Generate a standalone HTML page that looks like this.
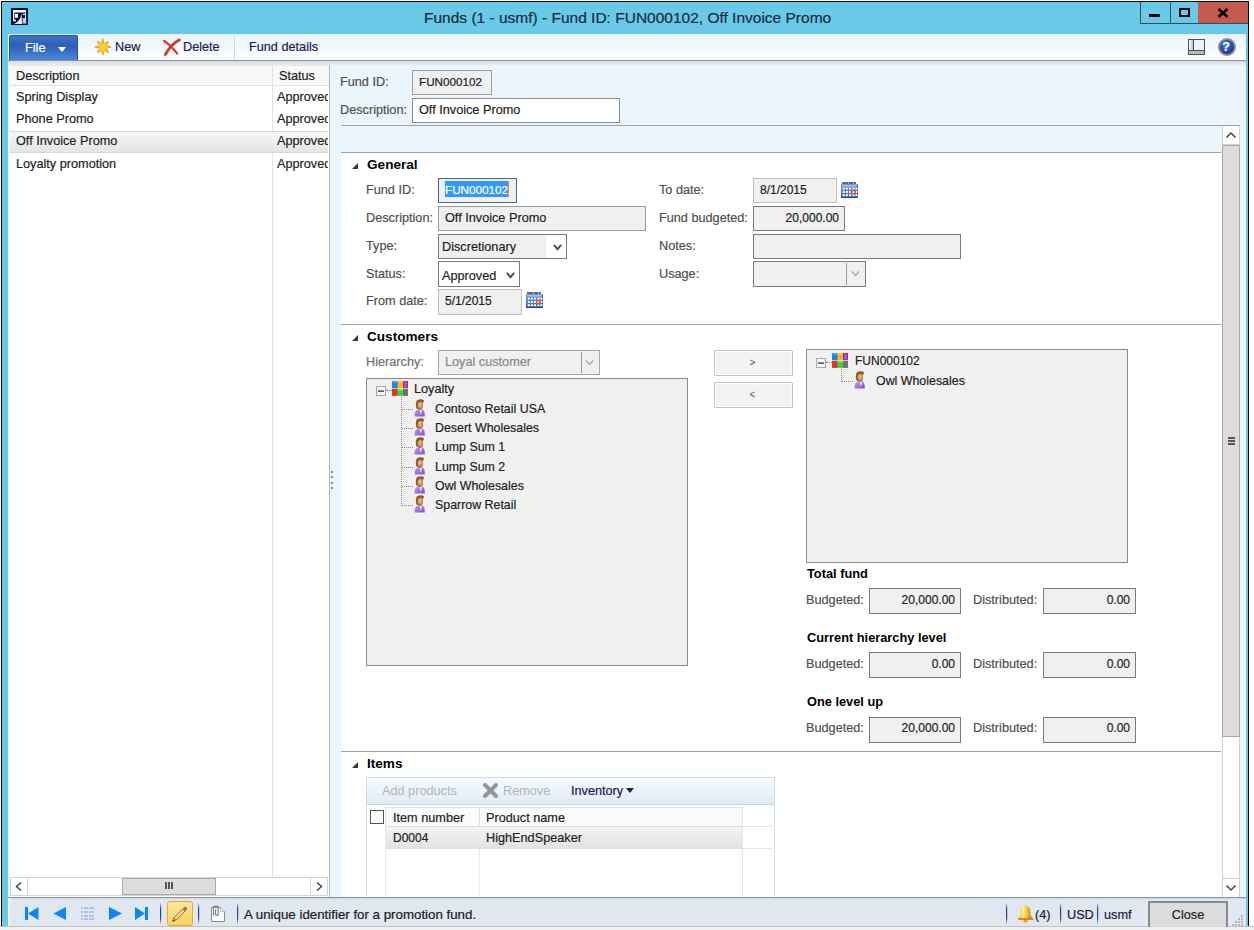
<!DOCTYPE html>
<html><head><meta charset="utf-8">
<style>
*{box-sizing:border-box;margin:0;padding:0}
html,body{width:1254px;height:930px;overflow:hidden;background:#f0f0f0;font-family:"Liberation Sans",sans-serif}
.a{position:absolute}
.t{position:absolute;font-size:12.7px;line-height:16px;white-space:nowrap;color:#1e1e1e;-webkit-text-stroke:0.2px currentColor}
.lb{color:#505050}
.n{font-size:12px}
.b{font-weight:bold;font-size:12.8px;color:#000;-webkit-text-stroke:0}
.box{position:absolute;background:#f0f0f0;border:1px solid #9a9a9a}
.hl{position:absolute;height:1px;background:#a0a0a0}
.sep{width:2px;height:23px;background:linear-gradient(rgba(30,70,120,0),#1e4a80 30%,#1e4a80 70%,rgba(30,70,120,0));border-right:1px solid rgba(255,255,255,.7)}
.tri{position:absolute;width:0;height:0;border-left:6px solid transparent;border-bottom:6px solid #383838}
</style></head><body>
<svg width="0" height="0" style="position:absolute"><defs>
<symbol id="hier" viewBox="0 0 16 15"><rect x="0" y="0" width="5.8" height="7" fill="#1a86da"/><rect x="5.8" y="0" width="5.2" height="7" fill="#ffb516"/><rect x="11" y="0" width="5" height="7" fill="#9c28a8"/><rect x="12.5" y="0.5" width="2" height="6" fill="#b860c0"/><rect x="0" y="7.7" width="5.8" height="7.2" fill="#de3232"/><rect x="5.8" y="7.7" width="5.2" height="7.2" fill="#36d636"/><rect x="11" y="7.7" width="5" height="7.2" fill="#707070"/><rect x="0.5" y="0.3" width="4.5" height="1.2" fill="#5ab8f0"/><rect x="6.3" y="0.3" width="4.2" height="1.2" fill="#ffd860"/><rect x="6.3" y="8" width="4.2" height="1.2" fill="#90f090"/></symbol>
<symbol id="pers" viewBox="0 0 11 18"><defs><linearGradient id="pg" x1="0" y1="0" x2="1" y2="1"><stop offset="0" stop-color="#c49cf8"/><stop offset="1" stop-color="#7f4cc8"/></linearGradient><radialGradient id="fg" cx="0.4" cy="0.35" r="0.7"><stop offset="0" stop-color="#f0c08a"/><stop offset="1" stop-color="#c47e40"/></radialGradient></defs><path d="M0.6 17.6 C0.3 12.8 1.6 10.9 4.8 10.2 L7.6 10.2 C10.2 10.9 10.9 12.8 10.7 17.6z" fill="url(#pg)"/><path d="M5.6 10.4 L6.8 16 L8.2 10.6z" fill="#e6f2ea"/><rect x="5" y="9" width="2.6" height="1.8" fill="#a8601c"/><path d="M3.4 1 C5 -0.2 9.2 0 10 1.6 L9.6 3.2 L8.8 3.4 L8.8 8.5 C8.5 9.6 7.5 10.2 6.5 10.2 L3 10 C1.6 8.2 1.6 5 2.2 3 C2.5 2 2.9 1.4 3.4 1z" fill="#8e5c2a"/><ellipse cx="6.3" cy="6.3" rx="2.6" ry="3.6" fill="url(#fg)"/><path d="M3.2 3.6 C4.5 1.8 8 1.6 9.6 3.2 C8 2.8 5 3 3.2 3.6z" fill="#8e5c2a"/></symbol>
<symbol id="cal" viewBox="0 0 17 16"><defs><linearGradient id="cg" x1="0" y1="0" x2="0" y2="1"><stop offset="0" stop-color="#6b9af0"/><stop offset="1" stop-color="#3766c4"/></linearGradient></defs>
<rect x="0" y="2" width="17" height="14" rx="0.5" fill="url(#cg)"/><rect x="0" y="15" width="17" height="1" fill="#1f3f80"/><rect x="16" y="3" width="1" height="13" fill="#2a4a90"/>
<rect x="1" y="3" width="15" height="1.5" fill="#9cc0f8"/>
<g fill="#222"><circle cx="2" cy="1" r="0.9"/><circle cx="4" cy="1" r="0.9"/><circle cx="6" cy="1" r="0.9"/><rect x="7.5" y="0.3" width="5" height="1.4"/><circle cx="14" cy="1" r="0.9"/></g>
<g fill="#fff"><rect x="1.8" y="5.6" width="2" height="2"/><rect x="4.9" y="5.6" width="2" height="2"/><rect x="8" y="5.6" width="2" height="2"/><rect x="11.4" y="5.6" width="2" height="2"/><rect x="14.5" y="5.6" width="2" height="2"/>
<rect x="1.8" y="9" width="2" height="2"/><rect x="4.9" y="9" width="2" height="2"/><rect x="8" y="9" width="2" height="2"/><rect x="14.5" y="9" width="2" height="2"/>
<rect x="1.8" y="12.2" width="2" height="2"/><rect x="4.9" y="12.2" width="2" height="2"/><rect x="8" y="12.2" width="2" height="2"/><rect x="11.4" y="12.2" width="2" height="2"/><rect x="14.5" y="12.2" width="2" height="2"/></g>
<circle cx="12.3" cy="10" r="2.6" fill="#e8501c"/><rect x="11.5" y="9.2" width="1.7" height="1.7" fill="#fff"/></symbol>
<symbol id="minus" viewBox="0 0 10 10"><rect x="0.5" y="0.5" width="9" height="9" fill="#f4f4f4" stroke="#a8a8a8"/><rect x="2" y="4.5" width="6" height="1.2" fill="#222"/></symbol>
</defs></svg>
<!-- window -->
<div class="a" style="left:0;top:0;width:1254px;height:926px;background:#fff"></div>
<div class="a" style="left:0;top:926px;width:1254px;height:1px;background:#c2c2c2"></div>
<div class="a" style="left:1px;top:1px;width:1248px;height:925px;background:#000"></div>
<div class="a" style="left:2px;top:2px;width:1246px;height:924px;background:#68c9e9"></div>
<!-- title icon -->
<svg class="a" style="left:11px;top:8px" width="17" height="17" viewBox="0 0 17 17"><rect width="17" height="17" fill="#021040"/><path d="M2 2 H15 V4.6 H3.3 V11.8 H5 V13.2 H2z" fill="#fff"/><rect x="4" y="5.8" width="3" height="4" fill="#fff"/><path d="M3 16 C6 14.5 9.5 12 10.6 5.5 L11 16z" fill="#f4f6fa"/><rect x="11.6" y="10" width="3.6" height="5.6" fill="#c5ceda"/><rect x="11.6" y="5.6" width="3.4" height="1.4" fill="#c5ceda"/><rect x="14" y="4.6" width="1" height="6" fill="#e8ecf2"/></svg>
<div class="t" style="left:424px;top:8px;font-size:15.5px;line-height:20px;color:#1b2a38">Funds (1 - usmf) - Fund ID: FUN000102, Off Invoice Promo</div>
<!-- caption buttons -->
<div class="a" style="left:1140px;top:2px;width:59px;height:22px;border:1px solid #3d4a52;border-top:0;background:#68c9e9"></div>
<div class="a" style="left:1170px;top:2px;width:1px;height:22px;background:#3d4a52"></div>
<div class="a" style="left:1198px;top:2px;width:50px;height:22px;background:#c65a4e;border-bottom:1px solid #3d4a52"></div>
<div class="a" style="left:1149px;top:14px;width:11px;height:3px;background:#000"></div>
<div class="a" style="left:1179px;top:8px;width:11px;height:9px;border:2px solid #000;border-top-width:2px"></div>
<svg class="a" style="left:1217px;top:8px" width="12" height="10" viewBox="0 0 12 10"><path d="M1.5 1 L10.5 9 M10.5 1 L1.5 9" stroke="#000" stroke-width="2.6"/></svg>

<!-- toolbar -->
<div class="a" style="left:8px;top:34px;width:1238px;height:27px;background:linear-gradient(#ecf4fc,#fdfeff);border-top:1px solid #e2eef9;border-bottom:1px solid #8e9297"></div>
<div class="a" style="left:8px;top:61px;width:1238px;height:4px;background:linear-gradient(#d5d8dc,#e9edf1)"></div>
<div class="a" style="left:9px;top:35px;width:69px;height:25px;background:linear-gradient(#3f73c6,#2e5fb4 40%,#4a88da);border-radius:2px 2px 0 0;border:1px solid #2b4f98;border-bottom:0"></div>
<div class="t" style="left:25px;top:40px;color:#fff">File</div>
<div class="a" style="left:58px;top:47px;width:0;height:0;border-left:4px solid transparent;border-right:4px solid transparent;border-top:5px solid #fff"></div>
<svg class="a" style="left:94px;top:38px" width="18" height="18" viewBox="0 0 18 18"><defs><radialGradient id="sg"><stop offset="0" stop-color="#ffe040"/><stop offset="0.45" stop-color="#ffc018"/><stop offset="1" stop-color="#e58a0a"/></radialGradient></defs><polygon points="9.00,0.60 10.42,5.58 14.94,3.06 12.42,7.58 17.40,9.00 12.42,10.42 14.94,14.94 10.42,12.42 9.00,17.40 7.58,12.42 3.06,14.94 5.58,10.42 0.60,9.00 5.58,7.58 3.06,3.06 7.58,5.58" fill="url(#sg)" stroke="#e89a10" stroke-width="0.6" stroke-linejoin="round"/><circle cx="9" cy="9" r="3.4" fill="#ffd52a"/></svg>
<div class="t" style="left:115px;top:39px;color:#1c1a58">New</div>
<svg class="a" style="left:162px;top:38px" width="19" height="19" viewBox="0 0 19 19"><path d="M2 2.8 C7 6 11.5 11 15.2 15.6" stroke="#d8402c" stroke-width="2.2" fill="none" stroke-linecap="round"/><path d="M17.2 2 C12 4.5 7 10 3.4 16.5" stroke="#d23a26" stroke-width="2.8" fill="none" stroke-linecap="round"/></svg>
<div class="t" style="left:183px;top:39px;color:#1c1a58">Delete</div>
<div class="a" style="left:234px;top:35px;width:1px;height:25px;background:#d3d9e0;box-shadow:1px 0 0 #fff"></div>
<div class="t" style="left:249px;top:39px;color:#1c1a58">Fund details</div>
<!-- layout + help icons -->
<div class="a" style="left:1188px;top:39px;width:17px;height:16px;border:1px solid #4a5058;background:#f0f0f0"></div>
<div class="a" style="left:1189px;top:40px;width:4px;height:11px;background:linear-gradient(90deg,#fff,#bbb)"></div>
<div class="a" style="left:1193px;top:40px;width:1px;height:11px;background:#4a5058"></div>
<div class="a" style="left:1189px;top:50px;width:15px;height:1px;background:#4a5058"></div>
<div class="a" style="left:1189px;top:51px;width:15px;height:3px;background:#b8bcc0"></div>
<div class="a" style="left:1218px;top:38px;width:18px;height:18px;border-radius:50%;background:radial-gradient(circle at 40% 35%,#4a78e0,#1636a8 70%);border:2px solid #8c8c8c"></div>
<div class="t" style="left:1222px;top:39px;font-weight:bold;font-size:13px;color:#fff">?</div>

<!-- main area bg -->
<div class="a" style="left:8px;top:65px;width:1238px;height:832px;background:#eaf5fd"></div>

<!-- left list -->
<div class="a" style="left:10px;top:65px;width:319px;height:832px;background:#fff"></div>
<div class="a" style="left:10px;top:65px;width:319px;height:21px;background:#f8f8f8;border-top:1px solid #e6e6e6;border-bottom:1px solid #e2e2e2"></div>
<div class="a" style="left:272px;top:66px;width:1px;height:19px;background:#e2e2e2"></div>
<div class="a" style="left:272px;top:86px;width:1px;height:791px;background:#d9e6f5"></div>
<div class="a" style="left:329px;top:65px;width:1px;height:832px;background:#a9bbd2"></div>
<div class="t" style="left:16px;top:68px">Description</div>
<div class="t" style="left:279px;top:68px">Status</div>
<div class="a" style="left:10px;top:131px;width:318px;height:22px;background:linear-gradient(#f6f6f6,#e4e4e4);border-top:1px solid #d6d6d6;border-bottom:1px solid #d8d8d8"></div>
<div class="t" style="left:16px;top:89px">Spring Display</div>
<div class="t" style="left:16px;top:111px">Phone Promo</div>
<div class="t" style="left:16px;top:133px">Off Invoice Promo</div>
<div class="t" style="left:16px;top:156px">Loyalty promotion</div>
<div class="a" style="left:276px;top:86px;width:52px;height:90px;overflow:hidden">
<div class="t" style="left:1px;top:3px">Approved</div>
<div class="t" style="left:1px;top:25px">Approved</div>
<div class="t" style="left:1px;top:47px">Approved</div>
<div class="t" style="left:1px;top:70px">Approved</div>
</div>
<!-- h scrollbar -->
<div class="a" style="left:10px;top:877px;width:318px;height:19px;background:#fff;border:1px solid #d4d4d4"></div>
<div class="a" style="left:27px;top:878px;width:1px;height:17px;background:#d4d4d4"></div>
<div class="a" style="left:310px;top:878px;width:1px;height:17px;background:#d4d4d4"></div>
<div class="a" style="left:122px;top:878px;width:94px;height:17px;background:#dcdcdc;border:1px solid #ababab"></div>
<div class="a" style="left:165px;top:882px;width:2px;height:7px;background:#555"></div>
<div class="a" style="left:168px;top:882px;width:2px;height:7px;background:#555"></div>
<div class="a" style="left:171px;top:882px;width:2px;height:7px;background:#555"></div>
<svg class="a" style="left:14px;top:881px" width="10" height="11"><path d="M7 1.5 L2.5 5.5 L7 9.5" stroke="#444" stroke-width="1.5" fill="none"/></svg>
<svg class="a" style="left:314px;top:881px" width="10" height="11"><path d="M3 1.5 L7.5 5.5 L3 9.5" stroke="#444" stroke-width="1.5" fill="none"/></svg>
<!-- splitter grip -->
<div class="a" style="left:331px;top:471px;width:2px;height:2px;background:#8a8a8a"></div>
<div class="a" style="left:331px;top:476px;width:2px;height:2px;background:#8a8a8a"></div>
<div class="a" style="left:331px;top:482px;width:2px;height:2px;background:#8a8a8a"></div>
<div class="a" style="left:331px;top:487px;width:2px;height:2px;background:#8a8a8a"></div>

<!-- header fields -->
<div class="t lb" style="left:340px;top:74px">Fund ID:</div>
<div class="box" style="left:412px;top:70px;width:80px;height:25px;border-color:#9a9a9a"></div>
<div class="t n" style="left:419px;top:74px;font-size:11.7px">FUN000102</div>
<div class="t lb" style="left:340px;top:102px">Description:</div>
<div class="box" style="left:412px;top:98px;width:208px;height:25px;background:#fff;border-color:#8a8a8a"></div>
<div class="t" style="left:419px;top:102px">Off Invoice Promo</div>
<div class="hl" style="left:341px;top:125px;width:899px"></div>

<!-- scroll body -->
<div class="a" style="left:341px;top:152px;width:881px;height:745px;background:#fff"></div>
<div class="hl" style="left:341px;top:152px;width:880px"></div>
<!-- v scrollbar -->
<div class="a" style="left:1222px;top:126px;width:18px;height:771px;background:#fff;border-left:1px solid #d0d0d0;border-right:1px solid #d0d0d0"></div>
<svg class="a" style="left:1225px;top:130px" width="12" height="10"><path d="M1.5 7.5 L6 3 L10.5 7.5" stroke="#444" stroke-width="1.5" fill="none"/></svg>
<div class="a" style="left:1222px;top:144px;width:18px;height:1px;background:#d0d0d0"></div>
<div class="a" style="left:1222px;top:145px;width:18px;height:592px;background:#dcdcdc;border:1px solid #a8a8a8"></div>
<div class="a" style="left:1228px;top:437px;width:7px;height:2px;background:#555"></div>
<div class="a" style="left:1228px;top:440px;width:7px;height:2px;background:#555"></div>
<div class="a" style="left:1228px;top:443px;width:7px;height:2px;background:#555"></div>
<div class="a" style="left:1222px;top:878px;width:18px;height:1px;background:#d0d0d0"></div>
<svg class="a" style="left:1225px;top:883px" width="12" height="10"><path d="M1.5 2.5 L6 7 L10.5 2.5" stroke="#444" stroke-width="1.5" fill="none"/></svg>

<!-- General -->
<div class="tri" style="left:352px;top:163px"></div>
<div class="t b" style="left:367px;top:157px;font-size:13.6px">General</div>
<div class="t lb" style="left:366px;top:182px">Fund ID:</div>
<div class="box" style="left:438px;top:178px;width:79px;height:25px;border-color:#3f6c98"></div>
<div class="a" style="left:445px;top:181px;width:63px;height:16px;background:#3399ff"></div>
<div class="a" style="left:508px;top:181px;width:1px;height:16px;background:#f08020"></div>
<div class="t n" style="left:445px;top:182px;color:#fff;font-size:11.7px">FUN000102</div>
<div class="t lb" style="left:366px;top:210px">Description:</div>
<div class="box" style="left:438px;top:206px;width:208px;height:25px"></div>
<div class="t" style="left:445px;top:210px">Off Invoice Promo</div>
<div class="t lb" style="left:366px;top:238px">Type:</div>
<div class="box" style="left:438px;top:234px;width:129px;height:25px;border-color:#7a7a7a"></div>
<div class="a" style="left:546px;top:235px;width:20px;height:23px;background:#fff"></div>
<svg class="a" style="left:553px;top:243px" width="9" height="9"><path d="M0.9 1.8 L4.5 6.2 L8.1 1.8" stroke="#4a4a4a" stroke-width="1.9" fill="none"/></svg>
<div class="t" style="left:442px;top:239px">Discretionary</div>
<div class="t lb" style="left:366px;top:266px">Status:</div>
<div class="box" style="left:438px;top:261px;width:82px;height:26px;background:#fff;border-color:#7a7a7a"></div>
<svg class="a" style="left:506px;top:271px" width="9" height="9"><path d="M0.9 1.8 L4.5 6.2 L8.1 1.8" stroke="#4a4a4a" stroke-width="1.9" fill="none"/></svg>
<div class="t" style="left:442px;top:268px">Approved</div>
<div class="t lb" style="left:366px;top:293px">From date:</div>
<div class="box" style="left:438px;top:289px;width:84px;height:26px;border-color:#c0c0c0"></div>
<div class="t n" style="left:445px;top:293px">5/1/2015</div>
<svg class="a" style="left:526px;top:292px" width="17" height="16" viewBox="0 0 17 16"><use href="#cal"/></svg>

<div class="t lb" style="left:659px;top:182px">To date:</div>
<div class="box" style="left:753px;top:178px;width:84px;height:25px;border-color:#c0c0c0"></div>
<div class="t n" style="left:760px;top:182px">8/1/2015</div>
<svg class="a" style="left:841px;top:182px" width="17" height="16" viewBox="0 0 17 16"><use href="#cal"/></svg>
<div class="t lb" style="left:659px;top:210px">Fund budgeted:</div>
<div class="box" style="left:753px;top:206px;width:92px;height:25px;border-color:#7a7a7a"></div>
<div class="t n" style="left:753px;top:210px;width:86px;text-align:right">20,000.00</div>
<div class="t lb" style="left:659px;top:238px">Notes:</div>
<div class="box" style="left:753px;top:234px;width:208px;height:25px;border-color:#7a7a7a"></div>
<div class="t lb" style="left:659px;top:266px">Usage:</div>
<div class="box" style="left:753px;top:261px;width:113px;height:26px;border-color:#7a7a7a"></div>
<div class="a" style="left:846px;top:263px;width:1px;height:22px;background:#9a9a9a"></div>
<svg class="a" style="left:851px;top:270px" width="9" height="8"><path d="M1 1.5 L4.5 5.5 L8 1.5" stroke="#a8a8a8" stroke-width="1.2" fill="none"/></svg>

<div class="hl" style="left:341px;top:324px;width:880px"></div>
<!-- Customers -->
<div class="tri" style="left:352px;top:335px"></div>
<div class="t b" style="left:367px;top:329px;font-size:13.6px">Customers</div>
<div class="t lb" style="left:366px;top:354px;color:#707070">Hierarchy:</div>
<div class="box" style="left:438px;top:350px;width:162px;height:25px;border-color:#a8a8a8"></div>
<div class="a" style="left:581px;top:352px;width:1px;height:21px;background:#9a9a9a"></div>
<svg class="a" style="left:585px;top:359px" width="9" height="8"><path d="M1 1.5 L4.5 5.5 L8 1.5" stroke="#a8a8a8" stroke-width="1.2" fill="none"/></svg>
<div class="t" style="left:445px;top:354px;color:#888">Loyal customer</div>

<div class="box" style="left:366px;top:378px;width:322px;height:288px;border-color:#858c94"></div>
<svg class="a" style="left:376px;top:386px" width="10" height="10"><use href="#minus"/></svg>
<svg class="a" style="left:392px;top:381px" width="16" height="15"><use href="#hier"/></svg>
<div class="t" style="left:414px;top:381px">Loyalty</div>
<div class="a" style="left:386px;top:390px;width:6px;height:1px;border-top:1px dotted #888"></div>
<div class="a" style="left:401px;top:397px;width:1px;height:109px;border-left:1px dotted #888"></div>
<div class="a" style="left:402px;top:409px;width:11px;height:1px;border-top:1px dotted #888"></div>
<svg class="a" style="left:414px;top:399px" width="11" height="18"><use href="#pers"/></svg>
<div class="t" style="left:435px;top:401px;font-size:12.4px">Contoso Retail USA</div>
<div class="a" style="left:402px;top:428px;width:11px;height:1px;border-top:1px dotted #888"></div>
<svg class="a" style="left:414px;top:418px" width="11" height="18"><use href="#pers"/></svg>
<div class="t" style="left:435px;top:420px;font-size:12.4px">Desert Wholesales</div>
<div class="a" style="left:402px;top:447px;width:11px;height:1px;border-top:1px dotted #888"></div>
<svg class="a" style="left:414px;top:437px" width="11" height="18"><use href="#pers"/></svg>
<div class="t" style="left:435px;top:439px;font-size:12.4px">Lump Sum 1</div>
<div class="a" style="left:402px;top:467px;width:11px;height:1px;border-top:1px dotted #888"></div>
<svg class="a" style="left:414px;top:457px" width="11" height="18"><use href="#pers"/></svg>
<div class="t" style="left:435px;top:459px;font-size:12.4px">Lump Sum 2</div>
<div class="a" style="left:402px;top:486px;width:11px;height:1px;border-top:1px dotted #888"></div>
<svg class="a" style="left:414px;top:476px" width="11" height="18"><use href="#pers"/></svg>
<div class="t" style="left:435px;top:478px;font-size:12.4px">Owl Wholesales</div>
<div class="a" style="left:402px;top:505px;width:11px;height:1px;border-top:1px dotted #888"></div>
<svg class="a" style="left:414px;top:495px" width="11" height="18"><use href="#pers"/></svg>
<div class="t" style="left:435px;top:497px;font-size:12.4px">Sparrow Retail</div>


<div class="box" style="left:714px;top:350px;width:79px;height:26px;border-color:#c0c4c8;background:#f3f3f3;border-radius:1px;box-shadow:inset 0 0 0 1px #fbfbfb"></div>
<div class="t" style="left:713px;top:355px;width:79px;text-align:center;font-size:10px;color:#555;-webkit-text-stroke:0">&gt;</div>
<div class="box" style="left:714px;top:382px;width:79px;height:26px;border-color:#c0c4c8;background:#f3f3f3;border-radius:1px;box-shadow:inset 0 0 0 1px #fbfbfb"></div>
<div class="t" style="left:713px;top:387px;width:79px;text-align:center;font-size:10px;color:#555;-webkit-text-stroke:0">&lt;</div>

<div class="box" style="left:806px;top:349px;width:322px;height:214px;border-color:#858c94"></div>
<svg class="a" style="left:816px;top:358px" width="10" height="10"><use href="#minus"/></svg>
<svg class="a" style="left:832px;top:353px" width="16" height="15"><use href="#hier"/></svg>
<div class="t n" style="left:855px;top:353px">FUN000102</div>
<div class="a" style="left:826px;top:362px;width:6px;height:1px;border-top:1px dotted #888"></div>
<div class="a" style="left:841px;top:369px;width:1px;height:13px;border-left:1px dotted #888"></div>
<div class="a" style="left:842px;top:381px;width:11px;height:1px;border-top:1px dotted #888"></div>
<svg class="a" style="left:854px;top:371px" width="11" height="18"><use href="#pers"/></svg>
<div class="t" style="left:876px;top:373px;font-size:12.4px">Owl Wholesales</div>


<div class="t b" style="left:807px;top:566px">Total fund</div>
<div class="t lb" style="left:806px;top:592px">Budgeted:</div>
<div class="box" style="left:869px;top:588px;width:92px;height:26px;border-color:#7a7a7a"></div>
<div class="t n" style="left:869px;top:592px;width:86px;text-align:right">20,000.00</div>
<div class="t lb" style="left:973px;top:592px">Distributed:</div>
<div class="box" style="left:1043px;top:588px;width:93px;height:26px;border-color:#7a7a7a"></div>
<div class="t n" style="left:1043px;top:592px;width:87px;text-align:right">0.00</div>

<div class="t b" style="left:807px;top:630px">Current hierarchy level</div>
<div class="t lb" style="left:806px;top:656px">Budgeted:</div>
<div class="box" style="left:869px;top:652px;width:92px;height:26px;border-color:#7a7a7a"></div>
<div class="t n" style="left:869px;top:656px;width:86px;text-align:right">0.00</div>
<div class="t lb" style="left:973px;top:656px">Distributed:</div>
<div class="box" style="left:1043px;top:652px;width:93px;height:26px;border-color:#7a7a7a"></div>
<div class="t n" style="left:1043px;top:656px;width:87px;text-align:right">0.00</div>

<div class="t b" style="left:807px;top:694px">One level up</div>
<div class="t lb" style="left:806px;top:720px">Budgeted:</div>
<div class="box" style="left:869px;top:717px;width:92px;height:26px;border-color:#7a7a7a"></div>
<div class="t n" style="left:869px;top:720px;width:86px;text-align:right">20,000.00</div>
<div class="t lb" style="left:973px;top:720px">Distributed:</div>
<div class="box" style="left:1043px;top:717px;width:93px;height:26px;border-color:#7a7a7a"></div>
<div class="t n" style="left:1043px;top:720px;width:87px;text-align:right">0.00</div>

<div class="hl" style="left:341px;top:751px;width:880px"></div>
<!-- Items -->
<div class="tri" style="left:352px;top:762px"></div>
<div class="t b" style="left:367px;top:756px;font-size:13.6px">Items</div>
<div class="a" style="left:366px;top:777px;width:409px;height:120px;background:#fff;border:1px solid #cddcee;border-bottom:0"></div>
<div class="a" style="left:367px;top:778px;width:407px;height:27px;background:linear-gradient(#f6fafe,#dfebf8);border-bottom:1px solid #c6d6ea"></div>
<div class="t" style="left:382px;top:783px;color:#b4b4b4;-webkit-text-stroke:0">Add products</div>
<svg class="a" style="left:482px;top:782px" width="17" height="17" viewBox="0 0 17 17"><path d="M3 3 L14 14 M14 3 L3 14" stroke="#959595" stroke-width="4" stroke-linecap="round"/></svg>
<div class="t" style="left:503px;top:783px;color:#b4b4b4;-webkit-text-stroke:0">Remove</div>
<div class="t" style="left:571px;top:783px;color:#1c1a58">Inventory</div>
<div class="a" style="left:626px;top:788px;width:0;height:0;border-left:4px solid transparent;border-right:4px solid transparent;border-top:5px solid #1f1a5e"></div>
<div class="a" style="left:386px;top:807px;width:356px;height:20px;background:#fbfbfb;border-top:1px solid #e4e4e4;border-bottom:1px solid #dcdcdc"></div>
<div class="a" style="left:479px;top:808px;width:1px;height:19px;background:#dedede"></div>
<div class="a" style="left:742px;top:807px;width:1px;height:90px;background:#dde8f4"></div>
<div class="a" style="left:742px;top:826px;width:31px;height:1px;background:#dde8f4"></div>
<div class="a" style="left:742px;top:848px;width:31px;height:1px;background:#dde8f4"></div>
<div class="a" style="left:370px;top:810px;width:14px;height:14px;border:1px solid #555;background:#fff"></div>
<div class="t" style="left:393px;top:810px">Item number</div>
<div class="t" style="left:486px;top:810px">Product name</div>
<div class="a" style="left:386px;top:827px;width:356px;height:22px;background:linear-gradient(#f4f4f4,#e2e2e2);border-bottom:1px solid #d8e4f2"></div>
<div class="a" style="left:479px;top:849px;width:1px;height:48px;background:#dde8f4"></div>
<div class="a" style="left:385px;top:807px;width:1px;height:90px;background:#dfe9f4"></div>
<div class="t n" style="left:393px;top:830px">D0004</div>
<div class="t" style="left:486px;top:830px">HighEndSpeaker</div>

<!-- status bar -->
<div class="a" style="left:8px;top:897px;width:1238px;height:29px;background:#e0e7f0;border-top:1px solid #8c97a4"></div>
<div class="a" style="left:8px;top:898px;width:1238px;height:1px;background:#c9d6e8"></div>
<div class="a" style="left:8px;top:898px;width:2px;height:28px;background:#eef1f5"></div>
<svg class="a" style="left:24px;top:906px" width="130" height="16" viewBox="0 0 130 16">
<g fill="#0a86f8"><rect x="1" y="1" width="3" height="13"/><path d="M4 7.5 L14.5 1 L14.5 14z"/>
<path d="M29.5 7.5 L42 1 L42 14z"/>
<path d="M85 1 L98 7.5 L85 14z"/>
<path d="M111 1 L121 7.5 L111 14z"/><rect x="121" y="1" width="3" height="13"/></g>
<g fill="#a9c7ee"><rect x="57" y="1" width="2" height="2"/><rect x="60" y="1" width="4" height="2"/><rect x="65" y="1" width="5" height="2"/><rect x="57" y="5" width="2" height="2"/><rect x="60" y="5" width="4" height="2"/><rect x="65" y="5" width="5" height="2"/><rect x="57" y="9" width="2" height="2"/><rect x="60" y="9" width="4" height="2"/><rect x="65" y="9" width="5" height="2"/><rect x="57" y="12" width="2" height="2"/><rect x="60" y="12" width="4" height="2"/><rect x="65" y="12" width="5" height="2"/></g>
</svg>
<div class="a sep" style="left:160px;top:902px"></div>
<div class="a" style="left:167px;top:901px;width:26px;height:25px;border:1px solid #e2a83a;border-radius:3px;background:linear-gradient(#fde79a,#fcd25e)"></div>
<svg class="a" style="left:170px;top:904px" width="20" height="20" viewBox="0 0 20 20"><polygon points="3.87,13.87 6.13,16.13 15.13,7.13 12.87,4.87" fill="#f6e08a" stroke="#6a5020" stroke-width="0.8"/><polygon points="3.87,13.87 6.13,16.13 2.6,17.4" fill="#f0c89a" stroke="#6a5020" stroke-width="0.6"/><polygon points="2.6,17.4 3.2,15.6 4.4,16.8" fill="#222"/><polygon points="12.87,4.87 15.13,7.13 16.2,6.1 13.9,3.8" fill="#3a9a5a"/><polygon points="13.9,3.8 16.2,6.1 17.4,4.9 15.1,2.6" fill="#d04848"/></svg>
<div class="a sep" style="left:198px;top:902px"></div>
<svg class="a" style="left:210px;top:905px" width="16" height="18" viewBox="0 0 16 18"><path d="M1.5 2.5 H10.5 L14.5 6.5 V16.5 H1.5z" fill="#fff" stroke="#8a8a8a" stroke-width="1"/><path d="M10.5 2.5 V6.5 H14.5" fill="#eee" stroke="#b0b0b0" stroke-width="0.8"/><path d="M3.5 10.5 V3 C3.5 0.6 8.2 0.6 8.2 3 V9 C8.2 10.8 5.6 10.8 5.6 9 V4.2" fill="none" stroke="#7a7a7a" stroke-width="1.2"/></svg>
<div class="a sep" style="left:237px;top:902px"></div>
<div class="a sep" style="left:1006px;top:902px"></div>
<svg class="a" style="left:1017px;top:905px" width="18" height="18" viewBox="0 0 18 18"><defs><linearGradient id="bg1" x1="0" y1="0" x2="1" y2="0"><stop offset="0" stop-color="#f0b010"/><stop offset="0.35" stop-color="#fff0a0"/><stop offset="0.6" stop-color="#f8c828"/><stop offset="1" stop-color="#a86008"/></linearGradient></defs><circle cx="8.5" cy="1.6" r="1.2" fill="#e8a818"/><path d="M8.5 1 C4.6 1 3.6 4 3.6 8 C3.6 10.5 3 12 1 13.5 L16 13.5 C14 12 13.4 10.5 13.4 8 C13.4 4 12.4 1 8.5 1z" fill="url(#bg1)"/><rect x="1" y="13" width="15.5" height="2" rx="1" fill="#d88a10"/><ellipse cx="8.5" cy="16" rx="2.2" ry="1.6" fill="#e0a018"/></svg>
<div class="a sep" style="left:1060px;top:902px"></div>
<div class="a sep" style="left:1097px;top:902px"></div>
<svg class="a" style="left:1232px;top:914px" width="12" height="12"><g fill="#b0b8c4"><rect x="9" y="1" width="2" height="2"/><rect x="6" y="4" width="2" height="2"/><rect x="9" y="4" width="2" height="2"/><rect x="3" y="7" width="2" height="2"/><rect x="6" y="7" width="2" height="2"/><rect x="9" y="7" width="2" height="2"/><rect x="0" y="10" width="2" height="2"/><rect x="3" y="10" width="2" height="2"/><rect x="6" y="10" width="2" height="2"/><rect x="9" y="10" width="2" height="2"/></g></svg>

<div class="t" style="left:244px;top:907px;color:#1b1b1b;font-size:13.3px">A unique identifier for a promotion fund.</div>
<div class="t" style="left:1035px;top:907px;color:#1b1b3b">(4)</div>
<div class="t" style="left:1067px;top:907px;color:#1b1b3b">USD</div>
<div class="t" style="left:1104px;top:907px;color:#1b1b3b">usmf</div>
<div class="a" style="left:1148px;top:901px;width:80px;height:26px;background:#dcdcdc;border:2px solid #8a8a8a;border-bottom:0"></div>
<div class="t" style="left:1148px;top:907px;width:80px;text-align:center">Close</div>
</body></html>
